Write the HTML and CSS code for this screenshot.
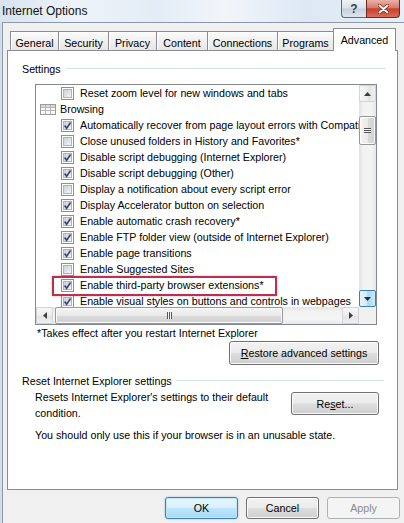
FILE: index.html
```html
<!DOCTYPE html>
<html>
<head>
<meta charset="utf-8">
<link rel="stylesheet" href="styles.css">
</head>
<body>
<svg class="defs" width="0" height="0" aria-hidden="true">
  <defs>
    <linearGradient id="cbg" x1="0" y1="0" x2="1" y2="1">
      <stop offset="0" stop-color="#c9cdd3"/>
      <stop offset="1" stop-color="#f7f7f7"/>
    </linearGradient>
    <symbol id="cb-off" viewBox="0 0 13 13">
      <rect x="0.5" y="0.5" width="12" height="12" fill="#fff" stroke="#8e8f8f"/>
      <rect x="2.5" y="2.5" width="8" height="8" fill="url(#cbg)" stroke="#aeb3b9"/>
    </symbol>
    <symbol id="cb-on" viewBox="0 0 13 13">
      <rect x="0.5" y="0.5" width="12" height="12" fill="#fff" stroke="#8e8f8f"/>
      <rect x="2.5" y="2.5" width="8" height="8" fill="url(#cbg)" stroke="#aeb3b9"/>
      <path d="M3.6 6.4 L5.6 9.2 L9.6 3.4" fill="none" stroke="#3b4a78" stroke-width="1.7"/>
    </symbol>
  </defs>
</svg>
<div class="window">
  <div class="titlebar">
    <span class="title">Internet Options</span>
    <div class="caption">
      <span class="cbtn help">?</span>
      <span class="cbtn close">
        <svg width="11" height="10" viewBox="0 0 11 10"><path d="M1.5 1.5 L9.5 8.5 M9.5 1.5 L1.5 8.5" stroke="#7a2418" stroke-width="3.6" stroke-linecap="round"/><path d="M1.5 1.5 L9.5 8.5 M9.5 1.5 L1.5 8.5" stroke="#fff" stroke-width="2" stroke-linecap="round"/></svg>
      </span>
    </div>
  </div>
  <div class="client">
    <div class="tabs">
      <div class="tab t-general">General</div>
      <div class="tab t-security">Security</div>
      <div class="tab t-privacy">Privacy</div>
      <div class="tab t-content">Content</div>
      <div class="tab t-conn">Connections</div>
      <div class="tab t-prog">Programs</div>
      <div class="tab active t-adv">Advanced</div>
    </div>
    <div class="panel">
      <div class="group-head"><span class="glabel">Settings</span><span class="rule"></span></div>
      <div class="listbox">
        <div class="list-main">
          <div class="list-items">
            <div class="row"><svg class="cb"><use href="#cb-off"/></svg><span>Reset zoom level for new windows and tabs</span></div>
            <div class="row cat">
              <svg class="caticon" width="16" height="11" viewBox="0 0 16 11"><rect x="0.5" y="0.5" width="15" height="10" fill="#fafafa" stroke="#9a9a9a"/><rect x="1" y="1" width="14" height="2.5" fill="#d9d9d9"/><path d="M1 3.5 H15 M1 6.5 H15 M5.5 1 V10 M10.5 1 V10" stroke="#b5b5b5" stroke-width="1"/></svg>
              <span>Browsing</span>
            </div>
            <div class="row"><svg class="cb"><use href="#cb-on"/></svg><span>Automatically recover from page layout errors with Compatibility View</span></div>
            <div class="row"><svg class="cb"><use href="#cb-off"/></svg><span>Close unused folders in History and Favorites*</span></div>
            <div class="row"><svg class="cb"><use href="#cb-on"/></svg><span>Disable script debugging (Internet Explorer)</span></div>
            <div class="row"><svg class="cb"><use href="#cb-on"/></svg><span>Disable script debugging (Other)</span></div>
            <div class="row"><svg class="cb"><use href="#cb-off"/></svg><span>Display a notification about every script error</span></div>
            <div class="row"><svg class="cb"><use href="#cb-on"/></svg><span>Display Accelerator button on selection</span></div>
            <div class="row"><svg class="cb"><use href="#cb-on"/></svg><span>Enable automatic crash recovery*</span></div>
            <div class="row"><svg class="cb"><use href="#cb-on"/></svg><span>Enable FTP folder view (outside of Internet Explorer)</span></div>
            <div class="row"><svg class="cb"><use href="#cb-on"/></svg><span>Enable page transitions</span></div>
            <div class="row"><svg class="cb"><use href="#cb-off"/></svg><span>Enable Suggested Sites</span></div>
            <div class="row"><svg class="cb"><use href="#cb-on"/></svg><span>Enable third-party browser extensions*</span></div>
            <div class="row"><svg class="cb"><use href="#cb-on"/></svg><span>Enable visual styles on buttons and controls in webpages</span></div>
            <div class="highlight"></div>
          </div>
          <div class="vscroll">
            <div class="sbtn up"><svg width="7" height="4" viewBox="0 0 7 4"><path d="M0 4 L3.5 0 L7 4 Z" fill="#3d3d3d"/></svg></div>
            <div class="vtrack"><div class="vthumb"><span class="vgrip"></span></div></div>
            <div class="sbtn down hot"><svg width="7" height="4" viewBox="0 0 7 4"><path d="M0 0 L7 0 L3.5 4 Z" fill="#1e2f48"/></svg></div>
          </div>
        </div>
        <div class="hscroll-row">
          <div class="hscroll">
            <div class="sbtn left"><svg width="4" height="7" viewBox="0 0 4 7"><path d="M4 0 L0 3.5 L4 7 Z" fill="#3d3d3d"/></svg></div>
            <div class="htrack"><div class="hthumb"><span class="hgrip"></span></div></div>
            <div class="sbtn right"><svg width="4" height="7" viewBox="0 0 4 7"><path d="M0 0 L4 3.5 L0 7 Z" fill="#3d3d3d"/></svg></div>
          </div>
          <div class="corner"></div>
        </div>
      </div>
      <div class="note">*Takes effect after you restart Internet Explorer</div>
      <div class="restore-row"><button class="btn restore"><u>R</u>estore advanced settings</button></div>
      <div class="group-head reset-head"><span class="glabel">Reset Internet Explorer settings</span><span class="rule"></span></div>
      <div class="reset-row">
        <p class="reset-text">Resets Internet Explorer's settings to their default condition.</p>
        <button class="btn reset">Re<u>s</u>et...</button>
      </div>
      <p class="warn">You should only use this if your browser is in an unusable state.</p>
    </div>
    <div class="dlg-btns">
      <button class="btn dlg default">OK</button>
      <button class="btn dlg">Cancel</button>
      <button class="btn dlg disabled">Apply</button>
    </div>
  </div>
</div>
</body>
</html>
```
FILE: styles.css
```css
* { box-sizing: border-box; }
html, body { margin: 0; padding: 0; }
body {
  width: 404px;
  height: 523px;
  overflow: hidden;
  font-family: "Liberation Sans", Arial, sans-serif;
  font-size: 10.7px;
  line-height: 14px;
  color: #000;
  background: #d3dde8;
}
.defs { position: absolute; width: 0; height: 0; }

.window {
  width: 410px;
  height: 523px;
  display: flex;
  flex-direction: column;
}

/* title bar */
.titlebar {
  height: 22px;
  flex: none;
  display: flex;
  align-items: flex-start;
  background: linear-gradient(90deg, #d8e3ef 0%, #eef3f9 18%, #e3ecf6 38%, #f1f5fa 55%, #dde8f4 75%, #e8eff7 100%);
}
.title {
  flex: 1;
  font-size: 12px;
  line-height: 14px;
  padding: 4px 0 0 2px;
  color: #111;
}
.caption { display: flex; margin-right: 10px; }
.cbtn {
  height: 18px;
  display: flex;
  align-items: center;
  justify-content: center;
  border: 1px solid #5f6b7a;
  border-top: none;
}
.help {
  width: 25px;
  border-right: none;
  border-radius: 0 0 0 4px;
  background: linear-gradient(#eef2f6 0%, #dbe2ea 48%, #c6d0dc 52%, #dde4ec 100%);
  font-size: 12px;
  font-weight: bold;
  color: #3b3f46;
}
.close {
  width: 34px;
  border-radius: 0 0 4px 0;
  border-color: #6a2a22;
  background: linear-gradient(#eab1a6 0%, #d9796a 45%, #c8402e 52%, #d86e58 100%);
}

/* client */
.client {
  flex: 1;
  display: flex;
  flex-direction: column;
  background: #f0f0f0;
  margin-left: 2px;
  border-left: 1px solid #8d99a7;
  border-top: 1px solid #8d99a7;
}

/* tabs */
.tabs {
  display: flex;
  align-items: flex-end;
  height: 27px;
  padding-top: 5px;
  margin-left: 7px;
  position: relative;
  z-index: 1;
}
.tab {
  height: 19px;
  margin-right: -1px;
  padding-top: 4px;
  text-align: center;
  white-space: nowrap;
  border: 1px solid #898c95;
  border-bottom: none;
  background: linear-gradient(#fcfcfc, #f0f0f0 50%, #e6e6e6 100%);
  box-shadow: inset 1px 1px 0 #fff;
}
.tab.active {
  height: 23px;
  margin-bottom: -1px;
  padding-top: 4px;
  background: #fff;
  box-shadow: none;
}
.t-general { width: 49px; }
.t-security { width: 51px; }
.t-privacy { width: 49px; }
.t-content { width: 52px; }
.t-conn { width: 71px; }
.t-prog { width: 57px; }
.t-adv { width: 63px; }

/* panel */
.panel {
  flex: none;
  margin-left: 4px;
  width: 391px;
  height: 440px;
  border: 1px solid #898c95;
  background: #fff;
  padding: 11px 11px 0 14px;
}
.group-head {
  display: flex;
  align-items: center;
  height: 14px;
}
.glabel { white-space: nowrap; }
.rule {
  flex: 1;
  height: 2px;
  margin-left: 5px;
  border-top: 1px solid #d5dfe5;
  border-bottom: 1px solid #fff;
}
.reset-head { margin-top: 9px; }
.reset-head .rule { margin-left: 4px; margin-right: 2px; }

/* listbox */
.listbox {
  margin: 8px 0 0 13px;
  width: 342px;
  height: 241px;
  border: 1px solid #828790;
  display: flex;
  flex-direction: column;
  background: #fff;
}
.list-main { display: flex; height: 222px; }
.list-items {
  width: 323px;
  height: 222px;
  overflow: hidden;
  position: relative;
}
.row {
  height: 16px;
  display: flex;
  align-items: center;
  white-space: nowrap;
  padding-left: 25px;
}
.row .cb { width: 13px; height: 13px; flex: none; margin-right: 6px; }
.row.cat { padding-left: 4px; }
.caticon { flex: none; margin-right: 4px; }
.highlight {
  position: absolute;
  left: 16px;
  top: 191px;
  width: 225px;
  height: 20px;
  border: 2px solid #bd2f4e;
  box-shadow: 0 0 2px rgba(230, 100, 140, 0.6);
}

/* scrollbars */
.vscroll {
  width: 17px;
  display: flex;
  flex-direction: column;
  background: linear-gradient(90deg, #e2e2e2 0%, #f2f2f2 25%, #f4f4f4 75%, #e6e6e6 100%);
}
.sbtn {
  width: 17px;
  height: 17px;
  flex: none;
  display: flex;
  align-items: center;
  justify-content: center;
  border: 1px solid #d4d4d4;
  border-radius: 2px;
  background: linear-gradient(90deg, #f7f7f7, #ececec 50%, #e2e2e2 51%, #f0f0f0);
}
.sbtn.hot {
  border-color: #3c7fb1;
  background: linear-gradient(90deg, #e6f5fd 0%, #cdecfb 45%, #a7d9f2 52%, #c9ebfa 100%);
}
.vtrack { flex: 1; position: relative; }
.vthumb {
  margin-top: 14px;
  height: 29px;
  border: 1px solid #979797;
  border-radius: 2px;
  background: linear-gradient(90deg, #f4f4f4 0%, #e9e9e9 50%, #dadada 51%, #d2d2d2 100%);
  box-shadow: inset 0 0 0 1px #fbfbfb;
  display: flex;
  align-items: center;
  justify-content: center;
}
.vgrip {
  width: 7px;
  height: 5px;
  background: repeating-linear-gradient(#555 0 1px, #f6f6f6 1px 2px);
}
.hscroll-row { display: flex; height: 17px; }
.hscroll {
  width: 323px;
  display: flex;
  background: linear-gradient(#e2e2e2 0%, #f2f2f2 25%, #f4f4f4 75%, #e6e6e6 100%);
}
.sbtn.left, .sbtn.right {
  background: linear-gradient(#f7f7f7, #ececec 50%, #e2e2e2 51%, #f0f0f0);
}
.htrack { flex: 1; display: flex; }
.hthumb {
  margin-left: 2px;
  width: 228px;
  height: 17px;
  border: 1px solid #979797;
  border-radius: 2px;
  background: linear-gradient(#f4f4f4 0%, #e9e9e9 50%, #dadada 51%, #d2d2d2 100%);
  box-shadow: inset 0 0 0 1px #fbfbfb;
  display: flex;
  align-items: center;
  justify-content: center;
}
.hgrip {
  width: 5px;
  height: 7px;
  background: repeating-linear-gradient(90deg, #555 0 1px, #f6f6f6 1px 2px);
}
.corner { width: 17px; height: 17px; background: #f0f0f0; }

/* texts and buttons */
.note { margin: 1px 0 0 15px; height: 14px; white-space: nowrap; }
.restore-row { display: flex; justify-content: flex-end; margin: 1px 7px 0 0; }
.btn {
  font-family: inherit;
  font-size: 10.7px;
  line-height: 14px;
  color: #000;
  padding: 0;
  border: 1px solid #707070;
  border-radius: 3px;
  background: linear-gradient(#f2f2f2 0%, #ebebeb 48%, #dddddd 52%, #cfcfcf 100%);
  box-shadow: inset 0 0 0 1px rgba(255, 255, 255, 0.85);
}
.restore { width: 150px; height: 24px; }
.reset-row {
  display: flex;
  justify-content: space-between;
  align-items: flex-start;
  margin: 1px 7px 0 13px;
}
.reset-text {
  margin: 0;
  width: 250px;
  line-height: 16px;
}
.reset { width: 88px; height: 23px; margin-top: 3px; }
.warn { margin: 7px 0 0 13px; white-space: nowrap; }

.dlg-btns {
  display: flex;
  justify-content: flex-end;
  gap: 8px;
  padding: 7px 10px 0 0;
}
.dlg { width: 73px; height: 22px; }
.dlg.default {
  border-color: #3c7fb1;
  background: linear-gradient(#eaf6fd 0%, #d9f0fc 48%, #bee6fd 52%, #a7d9f5 100%);
  box-shadow: inset 0 0 0 1px #c4e5f6, 0 0 2px rgba(60, 127, 177, 0.5);
}
.dlg.disabled {
  color: #8a8a8a;
  border-color: #adb2b5;
  background: #f4f4f4;
  box-shadow: none;
}
```
